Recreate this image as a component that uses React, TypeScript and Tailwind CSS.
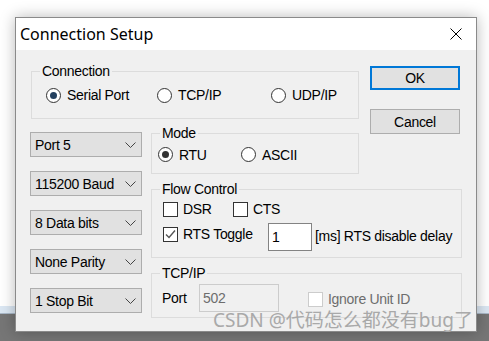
import React from 'react';

const ui = "font-['Liberation_Sans',sans-serif] text-[14px] leading-[16px] tracking-[-0.3px] whitespace-nowrap text-black";

const GroupBox: React.FC<{ label: string; className?: string; children?: React.ReactNode }> = ({ label, className, children }) => (
  <div className={`relative border border-[#dcdcdc] ${className ?? ''}`}>
    <span className="absolute -top-[9px] left-[8px] bg-[#f0f0f0] px-[2px] leading-[16px]">{label}</span>
    {children}
  </div>
);

const Radio: React.FC<{ checked?: boolean; label: string; dot?: string; className?: string }> = ({ checked, label, dot, className }) => (
  <div className={`flex items-center ${className ?? ''}`}>
    <span className="flex h-[15px] w-[15px] shrink-0 items-center justify-center rounded-full border border-[#333333] bg-white">
      {checked && <span className={`h-[7px] w-[7px] rounded-full ${dot ?? 'bg-[#333333]'}`} />}
    </span>
    <span className="ml-[6px]">{label}</span>
  </div>
);

const Check: React.FC<{ checked?: boolean; disabled?: boolean; label: string; className?: string }> = ({ checked, disabled, label, className }) => (
  <div className={`flex items-center ${className ?? ''}`}>
    <span
      className={`flex h-[15px] w-[15px] shrink-0 items-center justify-center border bg-white ${
        disabled ? 'border-[#cccccc]' : 'border-[#333333]'
      }`}
    >
      {checked && (
        <svg width="13" height="13" viewBox="0 0 13 13">
          <polyline points="2,6.5 5,9.5 11,2.5" fill="none" stroke="#555555" strokeWidth="1.4" />
        </svg>
      )}
    </span>
    <span className={`ml-[5px] ${disabled ? 'text-[#6d6d6d]' : ''}`}>{label}</span>
  </div>
);

const Combo: React.FC<{ value: string }> = ({ value }) => (
  <div className="flex h-[25px] items-center justify-between border border-[#adadad] bg-[#e1e1e1] pl-[4px] pr-[5px]">
    <span>{value}</span>
    <svg width="11" height="6" viewBox="0 0 11 6">
      <polyline points="0.5,0.5 5.5,5.5 10.5,0.5" fill="none" stroke="#444444" strokeWidth="1" />
    </svg>
  </div>
);

export default function App() {
  return (
    <div className="relative h-[341px] w-[489px] overflow-hidden">
      {/* desktop behind the dialog */}
      <div className="flex h-full flex-col">
        <div className="h-[306px] bg-white" />
        <div className="h-[7px] bg-[#dbe7f3]" />
        <div className="h-px bg-[#a9b8c8]" />
        <div className="flex-1 bg-[#767676]" />
      </div>

      {/* dialog window */}
      <div className="absolute left-[15px] top-[17px] flex h-[315px] w-[462px] flex-col border border-[#8a8a8a] bg-[#f0f0f0] shadow-[0_0_14px_rgba(0,0,0,0.28)]">
        <div className="flex h-[32px] items-center justify-between bg-white pl-[4px] pr-[14px]">
          <span className="font-['Noto_Sans',sans-serif] text-[16px] text-black">Connection Setup</span>
          <svg width="12" height="12" viewBox="0 0 12 12">
            <path d="M0.5 0.5 L11.5 11.5 M11.5 0.5 L0.5 11.5" stroke="#000000" strokeWidth="1" />
          </svg>
        </div>

        <div className={`grid flex-1 grid-cols-[112px_208px_101px] content-start gap-x-[9px] pl-[14px] pt-[16px] ${ui}`}>
          {/* Connection */}
          <GroupBox label="Connection" className="col-span-2 ml-[1px] mt-[5px] flex h-[48px] items-center pl-[14px]">
            <Radio checked label="Serial Port" dot="bg-[#23405f]" className="w-[111px]" />
            <Radio label="TCP/IP" className="w-[114px]" />
            <Radio label="UDP/IP" />
          </GroupBox>

          {/* Buttons */}
          <div className="row-span-2 ml-[2px] flex w-[90px] flex-col">
            <button className="h-[24px] border-2 border-[#0078d7] bg-[#e1e1e1]">OK</button>
            <button className="mt-[19px] h-[25px] border border-[#adadad] bg-[#e1e1e1]">Cancel</button>
          </div>

          {/* Serial settings */}
          <div className="row-span-3 mt-[13px] flex flex-col gap-[14px]">
            <Combo value="Port 5" />
            <Combo value="115200 Baud" />
            <Combo value="8 Data bits" />
            <Combo value="None Parity" />
            <Combo value="1 Stop Bit" />
          </div>

          {/* Mode */}
          <GroupBox label="Mode" className="mt-[14px] flex h-[41px] items-center pl-[6px] pt-[2px]">
            <Radio checked label="RTU" className="w-[83px]" />
            <Radio label="ASCII" />
          </GroupBox>

          {/* Flow Control */}
          <GroupBox label="Flow Control" className="col-span-2 mt-[15px] h-[69px] w-[311px] pl-[11px] pt-[11px]">
            <div className="flex">
              <Check label="DSR" className="w-[70px]" />
              <Check label="CTS" />
            </div>
            <div className="mt-[6px] flex items-start">
              <Check checked label="RTS Toggle" className="mt-[3px] w-[105px]" />
              <div className="flex h-[28px] w-[44px] items-center border border-[#838383] bg-white pl-[3px]">1</div>
              <span className="ml-[3px] mt-[5px]">[ms] RTS disable delay</span>
            </div>
          </GroupBox>

          {/* TCP/IP */}
          <GroupBox label="TCP/IP" className="col-span-2 col-start-2 mt-[15px] flex h-[45px] w-[311px] items-start pl-[10px] pt-[10px]">
            <span className="mt-[6px] w-[37px]">Port</span>
            <div className="flex h-[28px] w-[80px] items-center border border-[#cccccc] bg-[#f0f0f0] pl-[3px] text-[#6d6d6d]">502</div>
            <Check disabled label="Ignore Unit ID" className="ml-[29px] mt-[7px]" />
          </GroupBox>
        </div>
      </div>

      {/* watermark */}
      <span className="absolute left-[213px] top-[309px] font-['Noto_Sans','Noto_Sans_CJK_SC',sans-serif] text-[19px] leading-[22px] text-[#a9a9a9]">
        CSDN @代码怎么都没有bug了
      </span>
    </div>
  );
}
